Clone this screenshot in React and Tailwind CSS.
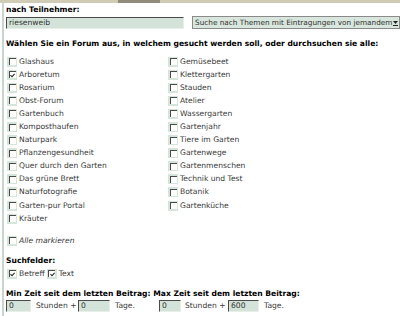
const left = [
  { label: "Glashaus" },
  { label: "Arboretum", checked: true },
  { label: "Rosarium" },
  { label: "Obst-Forum" },
  { label: "Gartenbuch" },
  { label: "Komposthaufen" },
  { label: "Naturpark" },
  { label: "Pflanzengesundheit" },
  { label: "Quer durch den Garten" },
  { label: "Das grüne Brett" },
  { label: "Naturfotografie" },
  { label: "Garten-pur Portal" },
  { label: "Kräuter" },
];

const right = [
  "Gemüsebeet",
  "Klettergarten",
  "Stauden",
  "Atelier",
  "Wassergarten",
  "Gartenjahr",
  "Tiere im Garten",
  "Gartenwege",
  "Gartenmenschen",
  "Technik und Test",
  "Botanik",
  "Gartenküche",
];

function Box({ checked }) {
  return (
    <span className="w-[10px] h-[10px] bg-[#d6e5da] flex items-center justify-center shrink-0">
      <span className="w-[7px] h-[7px] bg-white border-t border-l border-t-[#4a4a4a] border-l-[#4a4a4a] flex items-center justify-center">
        {checked && (
          <svg width="5" height="5" viewBox="0 0 5 5">
            <path d="M0.5 2.2 L2 3.8 L4.6 0.8" stroke="#222" strokeWidth="1.1" fill="none" />
          </svg>
        )}
      </span>
    </span>
  );
}

function Item({ label, checked, italic }) {
  return (
    <div className="h-[13.1px] flex items-center gap-[2px]">
      <Box checked={checked} />
      <span className={italic ? "italic" : ""}>{label}</span>
    </div>
  );
}

function Field({ value, w }) {
  return (
    <span className={`${w} h-[12px] bg-[#d3e3da] border border-t-[#4a4a4a] border-l-[#4a4a4a] border-b-[#e8efe9] border-r-[#e8efe9] flex items-center pl-[2px] text-[#333]`}>
      {value}
    </span>
  );
}

export default function App() {
  return (
    <div
      className="w-[400px] h-[316px] bg-white overflow-hidden text-[7.6px] leading-[10px] text-[#3a3a3a]"
      style={{ fontFamily: '"DejaVu Sans", Verdana, sans-serif' }}
    >
      <div className="h-[3px] bg-[#cfcbb4] flex">
        <div className="ml-[118px] w-[42px] bg-[#8f8c7c]" />
      </div>
      <div className="pl-[2px]">
        <div className="border-l-[2px] border-[#c9d6d0] pl-[2px] h-[313px]">
          <div className="pt-[2px] font-bold text-black">nach Teilnehmer:</div>
          <div className="flex items-center mt-[1px]">
            <Field value="riesenweib" w="w-[178px]" />
            <div className="ml-[8px] flex-1 h-[13px] bg-[#d8e6dd] border border-[#8a8a8a] flex items-center pl-[2px] text-[#333] text-[7.3px] whitespace-nowrap overflow-hidden">
              <span className="flex-1">Suche nach Themen mit Eintragungen von jemandem</span>
              <svg width="5" height="6" viewBox="0 0 5 6" className="shrink-0 mr-[1px]">
                <path d="M0 1 L5 1 L2.5 4 Z" fill="#222" />
                <rect x="0" y="5" width="5" height="1" fill="#222" />
              </svg>
            </div>
          </div>
          <div className="mt-[10px] font-bold text-black whitespace-nowrap">
            Wählen Sie ein Forum aus, in welchem gesucht werden soll, oder durchsuchen sie alle:
          </div>
          <div className="mt-[6px] grid grid-cols-[161px_1fr] pl-[1px]">
            <div>
              {left.map((it) => (
                <Item key={it.label} label={it.label} checked={it.checked} />
              ))}
            </div>
            <div>
              {right.map((l) => (
                <Item key={l} label={l} />
              ))}
            </div>
          </div>
          <div className="mt-[9px] pl-[1px]">
            <Item label="Alle markieren" italic />
          </div>
          <div className="mt-[9px] font-bold text-black">Suchfelder:</div>
          <div className="flex items-center pl-[1px] mt-[1px]">
            <Item label="Betreff" checked />
            <span className="w-[2px]" />
            <Item label="Text" checked />
          </div>
          <div className="mt-[9px] font-bold text-black whitespace-nowrap">
            Min Zeit seit dem letzten Beitrag: Max Zeit seit dem letzten Beitrag:
          </div>
          <div className="flex items-center mt-[1px] whitespace-nowrap">
            <Field value="0" w="w-[25px]" />
            <span className="ml-[5px] w-[42px]">Stunden +</span>
            <Field value="0" w="w-[32px]" />
            <span className="ml-[5px] w-[44px]">Tage.</span>
            <Field value="0" w="w-[22px]" />
            <span className="ml-[4px] w-[43px]">Stunden +</span>
            <Field value="600" w="w-[31px]" />
            <span className="ml-[5px]">Tage.</span>
          </div>
        </div>
      </div>
    </div>
  );
}
